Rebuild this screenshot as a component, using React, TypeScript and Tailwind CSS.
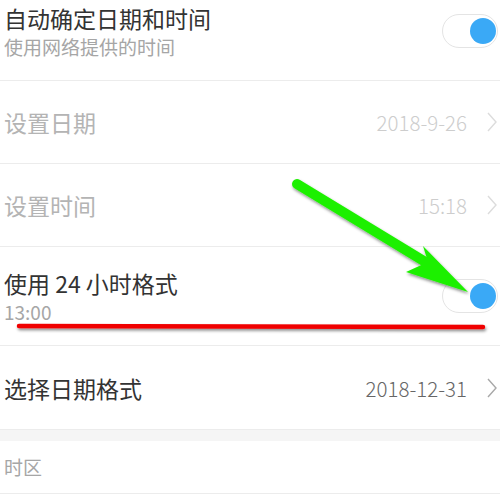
import React from "react";

const font = { fontFamily: '"Noto Sans CJK SC", "Noto Sans", sans-serif' };

function Toggle() {
  return (
    <div className="flex h-[34px] w-[56px] items-center justify-end rounded-full border border-[#e4e4e4] bg-white pr-[1px]">
      <span className="h-[26px] w-[26px] rounded-full bg-[#3aa9f6]" />
    </div>
  );
}

function Chevron({ color }: { color: string }) {
  return (
    <svg width="10" height="20" viewBox="0 0 10 20" fill="none">
      <polyline points="1,1 9,10 1,19" stroke={color} strokeWidth="1.4" />
    </svg>
  );
}

function Row({ title, value, dim, tall }: { title: string; value: string; dim?: boolean; tall?: boolean }) {
  return (
    <div className={`flex ${tall ? "h-[84px]" : "h-[83px]"} items-center justify-between border-b border-[#ececec] pl-[4px] pr-[3px]`}>
      <span className={`text-[23px] leading-[30px] ${dim ? "text-[#b4b4b4]" : "text-[#333]"}`}>{title}</span>
      <div className="flex items-center gap-[20px]">
        <span className={`text-[20.5px] font-light leading-[28px] ${dim ? "text-[#cdcdcd]" : "text-[#666]"}`}>{value}</span>
        <Chevron color={dim ? "#dcdcdc" : "#a8a8a8"} />
      </div>
    </div>
  );
}

function SwitchRow({ title, sub }: { title: string; sub: string }) {
  return (
    <div className="flex h-[99px] items-center justify-between border-b border-[#ececec] pl-[4px] pr-[2px]">
      <div className="flex flex-col pt-[1px]">
        <span className="text-[23px] leading-[30px] text-[#333]">{title}</span>
        <span className="mt-[1px] text-[19px] leading-[26px] text-[#a6a6a6]">{sub}</span>
      </div>
      <Toggle />
    </div>
  );
}

export default function App() {
  return (
    <div className="relative h-[500px] w-[500px] overflow-hidden bg-white" style={font}>
      <div className="-mt-[18px] flex flex-col">
        <SwitchRow title="自动确定日期和时间" sub="使用网络提供的时间" />
        <Row title="设置日期" value="2018-9-26" dim />
        <Row title="设置时间" value="15:18" dim />
        <SwitchRow title="使用 24 小时格式" sub="13:00" />
        <Row title="选择日期格式" value="2018-12-31" tall />
        <div className="h-[11px] bg-[#f5f5f5]" />
        <div className="flex h-[53px] items-center border-b border-[#ececec] pl-[4px]">
          <span className="text-[19px] leading-[26px] text-[#a6a6a6]">时区</span>
        </div>
      </div>

      <svg className="pointer-events-none absolute inset-0" width="500" height="500" viewBox="0 0 500 500">
        <defs>
          <filter id="sh" x="-10%" y="-10%" width="130%" height="130%">
            <feDropShadow dx="1" dy="2" stdDeviation="1.5" floodColor="#000" floodOpacity="0.45" />
          </filter>
        </defs>
        <g filter="url(#sh)">
          <line x1="297" y1="184" x2="432" y2="266" stroke="#1ff000" strokeWidth="10" strokeLinecap="round" />
          <polygon points="423,246 468,292 406,272 428,262" fill="#1ff000" />
          <line x1="19" y1="326" x2="483" y2="327" stroke="#f00000" strokeWidth="4.5" strokeLinecap="round" />
        </g>
      </svg>
    </div>
  );
}
